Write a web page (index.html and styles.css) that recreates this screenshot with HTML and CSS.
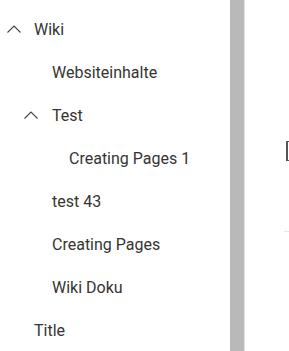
FILE: index.html
```html
<!DOCTYPE html>
<html>
<head>
<meta charset="utf-8">
<link rel="stylesheet" href="styles.css">
</head>
<body>
<div class="page">
  <nav class="nav">
    <div class="row lvl0"><svg class="chev" width="14" height="8" viewBox="0 0 14 8"><polyline points="0.5,7.5 7,1 13.5,7.5" fill="none" stroke="#444" stroke-width="1.1"/></svg><span>Wiki</span></div>
    <div class="row lvl1"><span>Websiteinhalte</span></div>
    <div class="row lvl1c"><svg class="chev" width="14" height="8" viewBox="0 0 14 8"><polyline points="0.5,7.5 7,1 13.5,7.5" fill="none" stroke="#444" stroke-width="1.1"/></svg><span>Test</span></div>
    <div class="row lvl2"><span>Creating Pages 1</span></div>
    <div class="row lvl1"><span>test 43</span></div>
    <div class="row lvl1"><span>Creating Pages</span></div>
    <div class="row lvl1"><span>Wiki Doku</span></div>
    <div class="row lvl0t"><span>Title</span></div>
  </nav>
  <div class="scrollbar"></div>
  <main class="main">
    <div class="bracket"></div>
    <div class="rule"></div>
  </main>
</div>
</body>
</html>
```

FILE: styles.css
```css
html, body {
  margin: 0;
  padding: 0;
  background: #fff;
}
.page {
  display: flex;
  width: 289px;
  height: 351px;
  overflow: hidden;
  font-family: Roboto, "Open Sans", sans-serif;
  color: #353433;
}
.nav {
  width: 230px;
  flex: none;
  padding-top: 8px;
  box-sizing: border-box;
}
.row {
  height: 43px;
  display: flex;
  align-items: center;
  font-size: 16px;
  white-space: nowrap;
}
.chev {
  flex: none;
  display: block;
  margin-top: -2px;
}
.lvl0 { padding-left: 7px; }
.lvl0 .chev { margin-right: 13px; }
.lvl0t { padding-left: 34px; }
.lvl1 { padding-left: 52px; }
.lvl1c { padding-left: 24px; }
.lvl1c .chev { margin-right: 14px; }
.lvl2 { padding-left: 69px; }
.scrollbar {
  width: 14px;
  flex: none;
  background: #b9b9b9;
  border-right: 1px solid #e4e4e4;
}
.main {
  flex: 1;
  position: relative;
}
.bracket {
  position: absolute;
  left: 41px;
  top: 141px;
  width: 4px;
  height: 20px;
  border: 1px solid #555;
  border-left-width: 2px;
  box-sizing: border-box;
}
.rule {
  position: absolute;
  left: 39px;
  top: 231px;
  width: 10px;
  height: 1px;
  background: #e6e6e6;
}
```
